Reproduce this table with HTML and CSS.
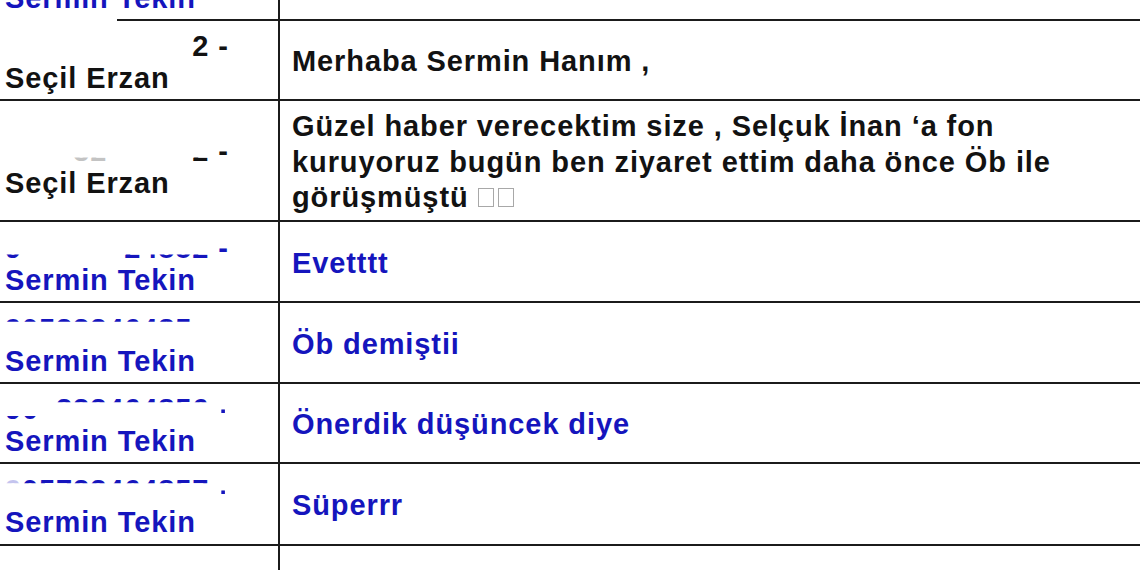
FILE: index.html
```html
<!DOCTYPE html>
<html lang="tr">
<head>
<meta charset="utf-8">
<title>Yazışma</title>
<link rel="stylesheet" href="styles.css">
</head>
<body>
<div class="sheet">

  <div class="row h80 first">
    <div class="who blue">
      <div class="ph"><span class="d hid">905332424852</span></div>
      <div class="name">Sermin Tekin</div>
    </div>
    <div class="msg blue"></div>
    <span class="scrub"></span>
  </div>

  <div class="row h80">
    <div class="who black">
      <div class="ph"><span class="d hid">90533242485</span><span class="d">2 -</span></div>
      <div class="name">Seçil Erzan</div>
    </div>
    <div class="msg black">Merhaba Sermin Hanım ,</div>
  </div>

  <div class="row h121">
    <div class="who black low">
      <div class="ph"><span class="d hid">9053</span><span class="d bt faint">32</span><span class="d hid">42485</span><span class="d bt">2</span><span class="d"> -</span></div>
      <div class="name">Seçil Erzan</div>
    </div>
    <div class="msg black">Güzel haber verecektim size , Selçuk İnan ‘a fon kuruyoruz bugün ben ziyaret ettim daha önce Öb ile görüşmüştü <span class="tofu"></span><span class="tofu"></span></div>
  </div>

  <div class="row h81">
    <div class="who blue">
      <div class="ph"><span class="d bt">9</span><span class="d hid">053324</span><span class="d bt">24852</span><span class="d"> -</span></div>
      <div class="name">Sermin Tekin</div>
    </div>
    <div class="msg blue">Evetttt</div>
  </div>

  <div class="row h81">
    <div class="who blue">
      <div class="ph"><span class="d tp">90533346485</span><span class="d hid">3 -</span></div>
      <div class="name">Sermin Tekin</div>
    </div>
    <div class="msg blue">Öb demiştii</div>
  </div>

  <div class="row h80">
    <div class="who blue">
      <div class="ph"><span class="d bt">90</span><span class="d hid">5</span><span class="d tp">333464856</span><span class="d hid"> </span><span class="d dot">-</span></div>
      <div class="name">Sermin Tekin</div>
    </div>
    <div class="msg blue">Önerdik düşüncek diye</div>
  </div>

  <div class="row h82">
    <div class="who blue">
      <div class="ph"><span class="d tp faint">9</span><span class="d tp">05733464857</span><span class="d hid"> </span><span class="d dot">-</span></div>
      <div class="name">Sermin Tekin</div>
    </div>
    <div class="msg blue">Süperrr</div>
  </div>

  <div class="row last">
    <div class="who blue"></div>
    <div class="msg blue"></div>
  </div>

</div>
</body>
</html>
```

FILE: styles.css
```css
html, body {
  margin: 0;
  padding: 0;
  background: #ffffff;
}

body {
  width: 1140px;
  height: 570px;
  overflow: hidden;
  font-family: "Liberation Sans", Arial, sans-serif;
  font-weight: bold;
  font-size: 29px;
  letter-spacing: 0.9px;
}

.sheet {
  width: 1200px;
  margin-top: -59px;
  display: flex;
  flex-direction: column;
}

.row {
  position: relative;
  display: grid;
  grid-template-columns: 280px 1fr;
  box-sizing: border-box;
  padding-top: 4px;
  border-bottom: 2px solid #1b1b1b;
}

.h80 { height: 80px; }
.h81 { height: 81px; }
.h82 { height: 82px; }
.h121 { height: 121px; }
.last { height: 120px; border-bottom: none; padding-top: 0; }

.who {
  box-sizing: border-box;
  border-right: 2px solid #1b1b1b;
  margin-top: -4px;
  padding-top: 4px;
  padding-left: 5px;
  display: flex;
  flex-direction: column;
  justify-content: center;
}

.who.low {
  padding-top: 12px;
}

.msg {
  box-sizing: border-box;
  padding: 0 100px 0 12px;
  display: flex;
  align-items: center;
  line-height: 35.5px;
}

.msg.black {
  display: block;
  align-self: center;
}

.blue { color: #1515bd; }
.black { color: #121212; }

.ph {
  line-height: 32px;
  height: 32px;
  white-space: nowrap;
}

.name {
  line-height: 32px;
  white-space: nowrap;
}

.d {
  display: inline-block;
  white-space: pre;
  line-height: 32px;
  height: 32px;
  vertical-align: top;
}

.hid { visibility: hidden; }
.tp { clip-path: inset(0 0 71% 0); }
.bt { clip-path: inset(72% 0 0 0); }
.faint { opacity: 0.25; }
.dot { clip-path: inset(0 4px 0 3px); }

.tofu {
  display: inline-block;
  width: 14px;
  height: 17px;
  border: 1.5px solid #a8a8a8;
  margin-right: 4px;
  vertical-align: baseline;
}

.scrub {
  position: absolute;
  left: 0;
  bottom: -2px;
  width: 117px;
  height: 2px;
  background: #ffffff;
}
```
